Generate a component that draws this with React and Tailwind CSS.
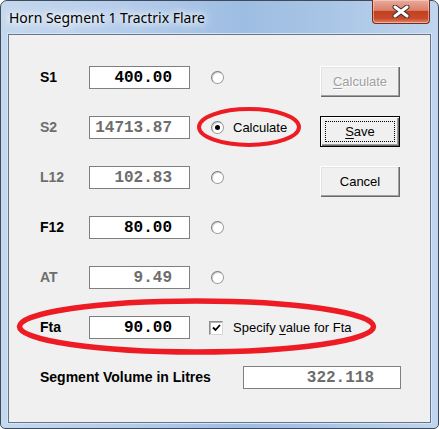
const sans = 'font-["Liberation_Sans",Arial,sans-serif]'
const mono = 'font-["Liberation_Mono","Courier_New",monospace]'

function Radio({ checked }) {
  return (
    <span className="flex h-[13px] w-[13px] shrink-0 items-center justify-center rounded-full border border-[#9a9a9a] border-l-[#7a7a7a] border-t-[#7a7a7a] bg-white shadow-[inset_1px_1px_0_#d4d4d4]">
      {checked && <span className="h-[5px] w-[5px] rounded-full bg-black" />}
    </span>
  )
}

function Checkbox() {
  return (
    <span className="flex h-[14px] w-[14px] shrink-0 items-center justify-center border border-[#8c8c8c] border-b-[#d8d8d8] border-r-[#d8d8d8] bg-white shadow-[inset_1px_1px_0_#b4b4b4]">
      <svg width="9" height="8" viewBox="0 0 9 8">
        <path d="M1 3.5 L3.5 6 L8 1" fill="none" stroke="#000" strokeWidth="1.8" />
      </svg>
    </span>
  )
}

function Button({ children, primary, disabled }) {
  return (
    <div
      className={
        'flex h-[31px] w-[80px] shrink-0 items-center justify-center bg-[#f0f0f0] text-[13px] ' +
        (primary
          ? 'border border-black shadow-[inset_1px_1px_0_#fff,inset_-1px_-1px_0_#696969,inset_-2px_-2px_0_#a0a0a0]'
          : 'shadow-[inset_1px_1px_0_#fff,inset_-1px_-1px_0_#696969,inset_-2px_-2px_0_#a0a0a0,inset_2px_2px_0_#e3e3e3]')
      }
    >
      {primary ? (
        <span className="flex h-[21px] w-[70px] items-center justify-center border border-dotted border-black">
          {children}
        </span>
      ) : (
        <span className={disabled ? 'text-[#a0a0a0] [text-shadow:1px_1px_0_#fff]' : 'text-black'}>
          {children}
        </span>
      )}
    </div>
  )
}

function Field({ label, value, dim, children, button }) {
  return (
    <div className="flex h-[23px] w-[360px] items-start whitespace-nowrap">
      <div className="flex min-w-[280px] shrink-0 items-center">
        <span className={'w-[49px] shrink-0 text-[14px] font-bold ' + (dim ? 'text-[#6d6d6d]' : 'text-black')}>
          {label}
        </span>
        <div
          className={
            mono +
            ' flex h-[23px] w-[101px] shrink-0 items-center justify-end border border-[#7f7f7f] bg-white pr-[17px] text-[16px] font-bold ' +
            (dim ? 'text-[#6d6d6d]' : 'text-black')
          }
        >
          {value}
        </div>
        {children}
      </div>
      {button}
    </div>
  )
}

export default function App() {
  return (
    <div className={sans + ' relative h-[429px] w-[439px] overflow-hidden bg-white'}>
      <div className="flex h-full w-full flex-col rounded-b-[5px] rounded-t-[7px] border border-[#3f4a5a] bg-[linear-gradient(90deg,#c4d8ee_0%,#b3cceb_30%,#9dbde2_55%,#a9c5e6_75%,#c0d5ed_100%)]">
        {/* title bar */}
        <div className="relative flex h-[33px] shrink-0 items-center pl-[8px]">
          <span className='pb-[1px] font-["Noto_Sans","Open_Sans",sans-serif] text-[14px] text-black [text-shadow:0_0_6px_#fff,0_0_10px_#fff,0_0_14px_#fff]'>
            Horn Segment 1 Tractrix Flare
          </span>
          <div className="absolute right-[8px] top-[-1px] flex h-[24px] w-[58px] items-center justify-center rounded-b-[4px] border border-t-0 border-[#7a2a1f] bg-[linear-gradient(#e9ab9c,#d9806c_45%,#c4411f_50%,#c8492a_80%,#de8a6c)] shadow-[inset_0_0_0_1px_rgba(255,220,210,0.5)]">
            <svg width="18" height="13" viewBox="0 0 18 13">
              <path d="M3 2 L15 11 M15 2 L3 11" stroke="#3c3030" strokeWidth="5" strokeLinecap="round" />
              <path d="M3 2 L15 11 M15 2 L3 11" stroke="#fff" strokeWidth="3" strokeLinecap="round" />
            </svg>
          </div>
        </div>

        {/* client area */}
        <div className="mx-[7px] mb-[5px] flex flex-1 flex-col gap-[27px] border border-[#66768a] bg-[#f0f0f0] pl-[31px] pt-[31px] text-[13px] shadow-[0_0_0_1px_#d6e4f3]">
          <Field label="S1" value="400.00" button={<Button disabled><span className="underline underline-offset-2">C</span>alculate</Button>}>
            <span className="ml-[21px]">
              <Radio />
            </span>
          </Field>
          <Field label="S2" value="14713.87" dim button={<Button primary><span className="underline underline-offset-2">S</span>ave</Button>}>
            <span className="ml-[21px] flex items-center gap-[9px]">
              <Radio checked />
              <span>Calculate</span>
            </span>
          </Field>
          <Field label="L12" value="102.83" dim button={<Button>Cancel</Button>}>
            <span className="ml-[21px]">
              <Radio />
            </span>
          </Field>
          <Field label="F12" value="80.00">
            <span className="ml-[21px]">
              <Radio />
            </span>
          </Field>
          <Field label="AT" value="9.49" dim>
            <span className="ml-[21px]">
              <Radio />
            </span>
          </Field>
          <Field label="Fta" value="90.00">
            <span className="ml-[19px] flex items-center gap-[10px]">
              <Checkbox />
              <span>
                Specify <span className="underline underline-offset-2">v</span>alue for Fta
              </span>
            </span>
          </Field>
          <div className="flex h-[23px] items-center whitespace-nowrap">
            <span className="w-[203px] shrink-0 text-[14px] font-bold">Segment Volume in Litres</span>
            <div className={mono + ' flex h-[23px] w-[158px] shrink-0 items-center justify-end border border-[#7f7f7f] bg-white pr-[26px] text-[16px] font-bold text-[#6d6d6d]'}>
              322.118
            </div>
          </div>
        </div>
      </div>

      {/* red annotation marks */}
      <svg className="pointer-events-none absolute inset-0" width="439" height="429">
        <ellipse cx="249" cy="127" rx="50" ry="18" fill="none" stroke="#ed1c24" strokeWidth="4" />
        <ellipse cx="196.5" cy="326.5" rx="177" ry="25.5" fill="none" stroke="#ed1c24" strokeWidth="5.5" />
      </svg>
    </div>
  )
}
